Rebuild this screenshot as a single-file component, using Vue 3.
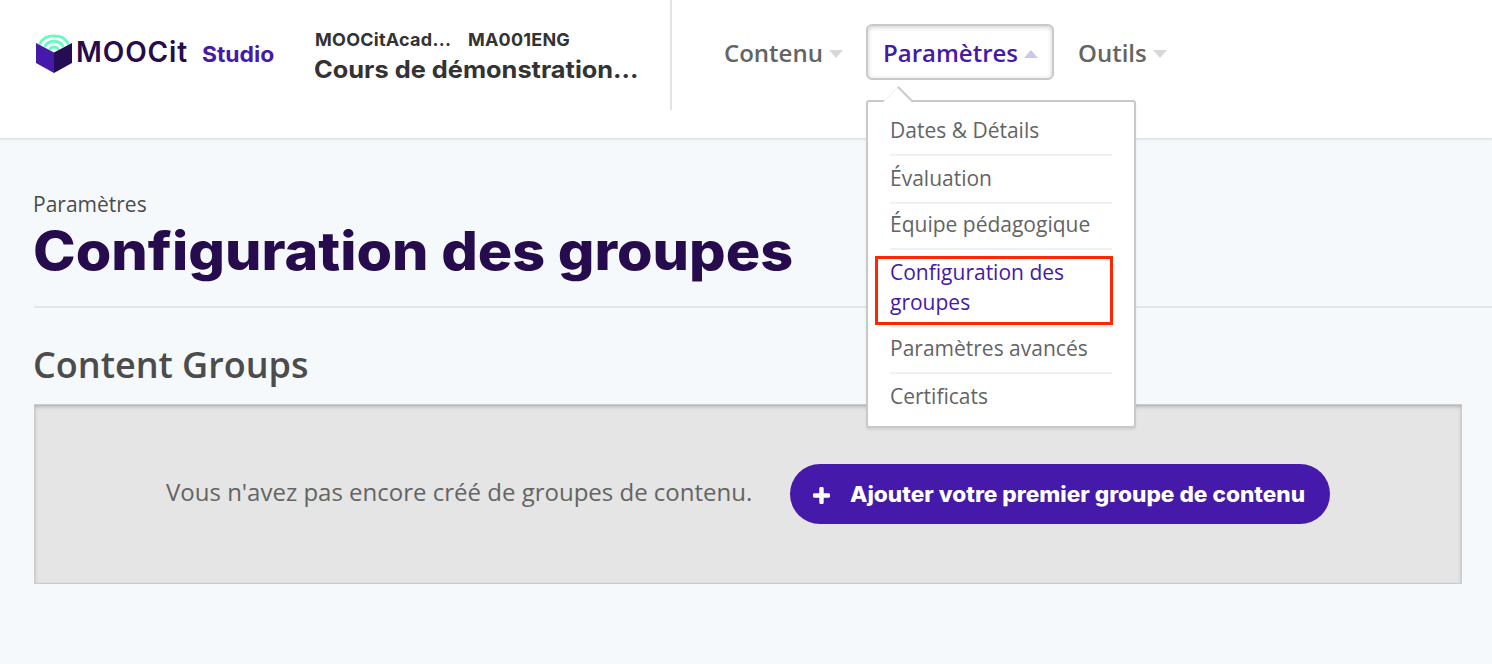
<script setup>
import { ref } from 'vue'

const menu = ref([
  { label: 'Dates & Détails' },
  { label: 'Évaluation' },
  { label: 'Équipe pédagogique', tight: true },
  { label: 'Configuration des groupes', active: true },
  { label: 'Paramètres avancés', tight: true },
  { label: 'Certificats' },
])
</script>

<template>
  <div class="page">
    <header class="header">
      <a class="brand">
        <svg class="brand-mark" viewBox="0 0 36 40" width="36" height="40">
          <g fill="none" stroke="#66fbc0" stroke-width="2.8">
            <path d="M3.4 10.5C8.5 -1 27.5 -1 32.6 10.5" />
            <path d="M8.6 12.8C12.4 5.4 23.6 5.4 27.4 12.8" />
            <path d="M13.5 16C15 12 21 12 22.5 16" />
          </g>
          <path d="M0 9L18 18.5V39L0 29Z" fill="#4519a9" />
          <path d="M36 9L18 18.5V39L36 29Z" fill="#260b55" />
        </svg>
        <span class="brand-name">MOOCit</span>
        <span class="brand-sub">Studio</span>
      </a>
      <div class="course">
        <div class="course-meta">
          <span class="org">MOOCitAcad...</span>
          <span class="num">MA001ENG</span>
        </div>
        <div class="course-title">Cours de démonstration...</div>
      </div>
      <nav class="nav">
        <div class="nav-item nav-contenu"><span>Contenu</span><i class="caret"></i></div>
        <div class="nav-item nav-params open">
          <span>Paramètres</span><i class="caret up"></i>
          <div class="dropdown">
            <svg class="pointer" width="32" height="17" viewBox="0 0 32 17">
              <path d="M0 17L1.5 15.5L16 1L30.5 15.5L32 17Z" fill="#fff" />
              <path d="M1.5 15.5L16 1" fill="none" stroke="#dedede" stroke-width=".6" />
              <path d="M16 1L31 16" fill="none" stroke="#c9c9c9" stroke-width="1.8" />
            </svg>
            <ul>
              <li v-for="m in menu" :key="m.label" :class="{ active: m.active, tight: m.tight }">{{ m.label }}</li>
            </ul>
            <div class="highlight"></div>
          </div>
        </div>
        <div class="nav-item nav-outils"><span>Outils</span><i class="caret"></i></div>
      </nav>
    </header>

    <main class="main">
      <div class="masthead">
        <div class="subtitle">Paramètres</div>
        <h1>Configuration des groupes</h1>
      </div>
      <h2>Content Groups</h2>
      <section class="empty">
        <p>Vous n'avez pas encore créé de groupes de contenu.</p>
        <button class="add" type="button">
          <svg width="17" height="17" viewBox="0 0 17 17">
            <path d="M8.5 1.8V15.2M1.8 8.5H15.2" stroke="#fff" stroke-width="4.4" stroke-linecap="round" />
          </svg>
          <span>Ajouter votre premier groupe de contenu</span>
        </button>
      </section>
    </main>
  </div>
</template>

<style>
body {
  background: #f5f9fc;
}
</style>

<style scoped>
.page {
  box-sizing: border-box;
  height: 664px;
  overflow: hidden;
  background: #f5f9fc;
  color: #4c4c4c;
  font-family: "Open Sans", "Noto Sans", sans-serif;
}
.header {
  display: flex;
  align-items: flex-start;
  height: 138px;
  padding-left: 36px;
  background: #fff;
  border-bottom: 1px solid #e0e3e6;
  box-shadow: 0 1px 2px rgba(0, 0, 0, 0.08);
}
.brand {
  display: flex;
  width: 279px;
  padding-top: 34px;
  font-family: Inter, "Liberation Sans", sans-serif;
  white-space: nowrap;
}
.brand-mark {
  flex: none;
}
.brand-name {
  width: 130px;
  padding-left: 4px;
  box-sizing: border-box;
  font-size: 28px;
  font-weight: 600;
  line-height: 36px;
  letter-spacing: 0.9px;
  color: #260b4d;
}
.brand-sub {
  font-size: 21px;
  font-weight: 700;
  line-height: 41px;
  color: #4519a9;
  transform: scaleX(1.09);
  transform-origin: 0 50%;
}
.course {
  box-sizing: border-box;
  width: 357px;
  height: 110px;
  padding-top: 28px;
  border-right: 2px solid #e4e4e4;
  font-family: Inter, "Liberation Sans", sans-serif;
  font-weight: 700;
  color: #333;
  white-space: nowrap;
}
.course-meta {
  display: flex;
  font-size: 18px;
  line-height: 24px;
}
.org {
  width: 153px;
  letter-spacing: 0.25px;
}
.num {
  letter-spacing: 0.2px;
}
.course-title {
  margin-top: 2px;
  margin-left: -1px;
  font-size: 24px;
  line-height: 32px;
  transform: scaleX(1.057);
  transform-origin: 0 50%;
}
.nav {
  display: flex;
  padding: 24px 0 0 35px;
}
.nav-item {
  position: relative;
  box-sizing: border-box;
  display: flex;
  align-items: center;
  height: 56px;
  padding: 2px 14px 0 15px;
  border: 2px solid transparent;
  border-radius: 6px;
  font-size: 24px;
  font-weight: 600;
  line-height: 36px;
  color: #646464;
}
.nav-contenu {
  width: 159px;
}
.nav-params {
  width: 188px;
}
.nav-outils {
  margin-left: 7px;
}
.open {
  border-color: #c9c9c9;
  box-shadow: inset 0 1px 5px rgba(0, 0, 0, 0.2);
  color: #4519a9;
}
.caret {
  margin: 1px 0 0 6px;
  border: 7px solid transparent;
  border-top: 8px solid #d8d8d8;
  border-bottom: 0;
}
.caret.up {
  border-top: 0;
  border-bottom: 8px solid #cfc4ea;
}
.dropdown {
  position: absolute;
  z-index: 2;
  top: 74px;
  left: -2px;
  box-sizing: border-box;
  width: 270px;
  height: 328px;
  padding: 13px 22px;
  background: #fff;
  border: 2px solid #c9c9c9;
  border-radius: 3px;
  box-shadow: 0 2px 2px rgba(0, 0, 0, 0.08);
}
.pointer {
  position: absolute;
  top: -16px;
  left: 14px;
}
ul {
  margin: 0;
  padding: 0;
  list-style: none;
}
li {
  padding: 7px 0 9px;
  border-bottom: 2px solid #f0f0f0;
  font-size: 21px;
  font-weight: 400;
  line-height: 30px;
  color: #646464;
}
li.tight {
  padding-top: 5px;
}
li:first-child {
  padding-top: 0;
}
li:last-child {
  border-bottom: 0;
}
li.active {
  color: #4519a9;
}
.highlight {
  position: absolute;
  top: 154px;
  left: 7px;
  box-sizing: border-box;
  width: 238px;
  height: 69px;
  border: 3px solid #ff2600;
}
.main {
  padding: 50px 0 0 34px;
}
.masthead {
  height: 117px;
  border-bottom: 2px solid #e4e5e6;
}
.subtitle {
  margin-left: -1px;
  font-size: 21px;
  line-height: 30px;
}
h1 {
  width: 720px;
  margin: 0 0 0 -1px;
  font-family: Inter, "Liberation Sans", sans-serif;
  font-size: 53px;
  font-weight: 800;
  line-height: 64px;
  color: #260b4d;
  white-space: nowrap;
  transform: scaleX(1.084);
  transform-origin: 0 50%;
}
h2 {
  margin: 33px 0 0 -1px;
  font-size: 36px;
  font-weight: 600;
  line-height: 48px;
}
.empty {
  display: flex;
  align-items: center;
  box-sizing: border-box;
  width: 1428px;
  height: 180px;
  margin-top: 15px;
  padding-left: 132px;
  background: #e5e5e5;
  box-shadow: inset 0 0 0 1px #cbcbcb, inset 0 2px 4px rgba(0, 0, 0, 0.3);
}
.empty p {
  width: 624px;
  margin: 0 0 4px;
  font-size: 24px;
  line-height: 36px;
  color: #646464;
  white-space: nowrap;
}
.add {
  display: flex;
  align-items: center;
  box-sizing: border-box;
  width: 540px;
  height: 60px;
  padding: 0 0 0 23px;
  border: 0;
  border-radius: 30px;
  background: #4519a9;
  color: #fff;
  font-family: Inter, "Liberation Sans", sans-serif;
  font-size: 21px;
  font-weight: 800;
  white-space: nowrap;
}
.add svg {
  margin-top: 2px;
}
.add span {
  margin-left: 20px;
  transform: scaleX(1.078);
  transform-origin: 0 50%;
}
</style>
